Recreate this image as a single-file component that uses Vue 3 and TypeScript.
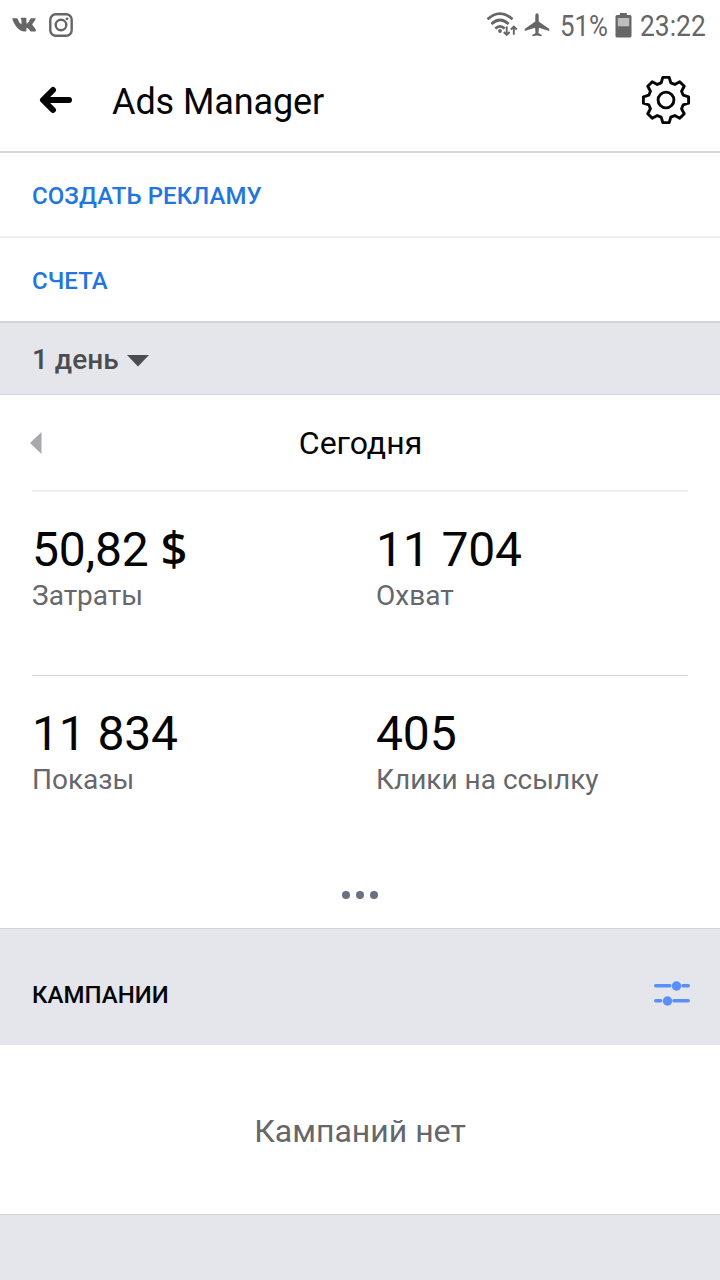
<script setup lang="ts">
interface Metric {
  value: string
  unit?: string
  label: string
}

const metricRows: Metric[][] = [
  [
    { value: '50,82', unit: '$', label: 'Затраты' },
    { value: '11 704', label: 'Охват' },
  ],
  [
    { value: '11 834', label: 'Показы' },
    { value: '405', label: 'Клики на ссылку' },
  ],
]

// Gear outline: one tooth profile repeated every 45 degrees.
const tooth: [number, number][] = [
  [-4.8, -17.2],
  [-3.2, -22.6],
  [3.2, -22.6],
  [4.8, -17.2],
]
const gearPoints = Array.from({ length: 8 }, (_, i) => {
  const a = (i * Math.PI) / 4
  return tooth
    .map(([x, y]) => {
      const px = x * Math.cos(a) - y * Math.sin(a)
      const py = x * Math.sin(a) + y * Math.cos(a)
      return `${px.toFixed(2)},${py.toFixed(2)}`
    })
    .join(' ')
}).join(' ')
</script>

<template>
  <div class="screen">
    <div class="status">
      <svg class="vk" width="25" height="16" viewBox="0 0 25 16">
        <path d="M1 1.2h3.8c.6 0 .8.3 1 .8 1 2.700 2.300 5 3.200 5 .4 0 .5-.3.5-1V3.500c0-1.200-.9-1.400-.9-1.900C8.600 1 9 .7 9.600.7h4c.6 0 .8.3.8 1v4c0 .6.200.8.500.8 1 0 2.500-2.400 3.300-4.500.2-.6.500-.8 1.100-.8h3.500c.8 0 1 .4.700 1-.5 1.500-3.300 4.800-3.300 5.400 0 .7 3 3.200 3.700 5.500.2.900-.2 1.500-1 1.500h-3.600c-1.200 0-2-2.700-3.900-3.600-.7-.3-1 0-1 .8v1.700c0 .8-.4 1.100-1.500 1.100C6.500 14.600 3 8.800.4 2.300.2 1.600.4 1.200 1 1.200z" />
      </svg>
      <svg class="insta" width="24" height="24" viewBox="0 0 24 24">
        <rect x="1.300" y="1.300" width="21.400" height="21.400" rx="5.500" />
        <circle cx="12" cy="12" r="5.300" />
        <circle class="solid" cx="18" cy="5.800" r="1.400" />
      </svg>
      <span class="grow" />
      <svg class="wifi" width="32" height="26" viewBox="0 0 32 26">
        <path class="arc" d="M1.500 7.200Q14-4 26.500 7.200M5.400 12Q14 4 22.600 12M9.300 16.500Q14 12.200 18.700 16.500" />
        <circle cx="14" cy="19" r="1.900" />
        <path class="traffic" d="M20.700 14.500v8M17.800 20l2.900 3 2.900-3M27.800 22.700v-7.500M24.900 17.500l2.900-3 2.900 3" />
      </svg>
      <svg class="plane" width="26" height="24" viewBox="0 0 26 24">
        <path d="M13 .3c1.100 0 1.700 1 1.700 2.500v5.600l10 7c.5.400.6.800.6 1.700v.9l-10.400-3.200-.4 5.200 3.200 2v1.300L13 22.600l-4.700.7V22l3.200-2-.4-5.200L.7 18v-.9c0-.9.1-1.300.6-1.700l10-7V2.800C11.300 1.300 11.900.3 13 .3z" />
      </svg>
      <span class="percent"><span>51%</span></span>
      <svg class="battery" width="17" height="25" viewBox="0 0 17 25">
        <path d="M4.800 0h7v2H15a1.500 1.500 0 0 1 1.500 1.500V23A1.500 1.500 0 0 1 15 24.500H2A1.500 1.500 0 0 1 .5 23V3.500A1.500 1.500 0 0 1 2 2h2.800z" />
        <rect x="2.800" y="5" width="11.400" height="8.300" fill="#bdbdbd" />
      </svg>
      <span class="clock"><span>23:22</span></span>
    </div>

    <header class="header">
      <svg class="back" width="34" height="28" viewBox="0 0 34 28">
        <path d="M15 4L5 14 15 24M6 14h25" />
      </svg>
      <h1>Ads Manager</h1>
      <svg class="gear" width="50" height="50" viewBox="-25 -25 50 50">
        <polygon :points="gearPoints" />
        <circle r="7.900" />
      </svg>
    </header>

    <button class="action first">СОЗДАТЬ РЕКЛАМУ</button>
    <button class="action">СЧЕТА</button>

    <div class="period">
      <span>1 день</span>
      <svg width="22" height="12" viewBox="0 0 22 12"><path d="M0 0h22L11 11.500z" /></svg>
    </div>

    <section class="stats">
      <div class="day">
        <svg width="12" height="22" viewBox="0 0 12 22"><path d="M11.500 0v22L0 11z" /></svg>
        <span class="day-name">Сегодня</span>
      </div>
      <div v-for="(row, i) in metricRows" :key="i" class="row">
        <div v-for="m in row" :key="m.label" class="metric">
          <div class="value">{{ m.value }}<template v-if="m.unit">&nbsp;<span class="unit">{{ m.unit }}</span></template></div>
          <div class="label">{{ m.label }}</div>
        </div>
      </div>
      <div class="dots"><i /><i /><i /></div>
    </section>

    <div class="section-head">
      <h2>КАМПАНИИ</h2>
      <svg width="36" height="26" viewBox="0 0 36 26">
        <path d="M1.800 5.800h14M29 5.800h5.200M1.800 20.800h4.700M20 20.800h14.200" />
        <circle cx="22.500" cy="6" r="4.700" />
        <circle cx="13.500" cy="21" r="4.700" />
      </svg>
    </div>
    <div class="empty">Кампаний нет</div>
    <div class="footer" />
  </div>
</template>

<style>
body {
  background: #fff;
}
</style>

<style scoped>
.screen {
  width: 720px;
  height: 1280px;
  display: flex;
  flex-direction: column;
  overflow: hidden;
  background: #fff;
  color: #050505;
  font-family: Roboto, sans-serif;
}
.screen * {
  box-sizing: border-box;
}
.screen > * {
  flex-shrink: 0;
}
svg {
  display: block;
  flex: none;
}
.status {
  height: 50px;
  display: flex;
  align-items: center;
  padding: 0 13px 0 12px;
  color: #666;
  fill: #666;
  font-size: 30px;
}
.insta {
  margin-left: 12px;
  fill: none;
  stroke: #666;
  stroke-width: 2.400;
}
.insta .solid {
  fill: #666;
  stroke: none;
}
.grow {
  flex: 1;
}
.wifi .arc,
.wifi .traffic {
  fill: none;
  stroke: #666;
  stroke-width: 2.700;
}
.wifi .traffic {
  stroke-width: 1.900;
}
.plane {
  margin-left: 6px;
}
.percent,
.clock {
  display: block;
  white-space: nowrap;
}
.percent {
  width: 49px;
  margin-left: 10px;
}
.clock {
  width: 67px;
  margin-left: 8px;
}
.percent span,
.clock span {
  display: inline-block;
  transform: scaleX(0.860);
  transform-origin: left;
}
.clock span {
  transform: scaleX(0.880);
}
.battery {
  margin-left: 6px;
}
.header {
  height: 103px;
  display: flex;
  align-items: center;
  padding: 0 29px 2px 38px;
  border-bottom: 2px solid #d8d8d8;
}
.back {
  fill: none;
  stroke: #050505;
  stroke-width: 6;
  stroke-linecap: round;
  stroke-linejoin: round;
}
h1 {
  flex: 1;
  margin: 4px 0 0 40px;
  font-size: 36px;
  font-weight: 400;
  letter-spacing: -0.100px;
}
.gear {
  fill: none;
  stroke: #050505;
  stroke-width: 2.900;
  stroke-linejoin: round;
}
.action {
  height: 83px;
  padding: 3px 32px 0;
  border: 0;
  background: #fff;
  color: #2276dc;
  text-align: left;
  font: 500 24px Roboto, sans-serif;
  letter-spacing: 0.070px;
}
.action.first {
  height: 85px;
  border-bottom: 2px solid #efefef;
}
.period {
  height: 74px;
  display: flex;
  align-items: center;
  gap: 9px;
  padding: 2px 32px 0;
  background: #e4e6eb;
  border-top: 2px solid #d2d4d8;
  border-bottom: 1px solid #d2d4d8;
  color: #4b4c4f;
  fill: #4b4c4f;
  font-size: 28px;
  font-weight: 500;
}
.period svg {
  margin: 3px 0 0 -1px;
}
.stats {
  height: 533px;
  padding: 0 32px;
}
.day {
  height: 97px;
  display: flex;
  align-items: center;
  border-bottom: 2px solid #eee;
  fill: #a7a9ad;
}
.day svg {
  margin-left: -2px;
}
.day-name {
  flex: 1;
  margin-right: 9px;
  text-align: center;
  font-size: 32px;
}
.row {
  height: 183px;
  display: grid;
  grid-template-columns: 344px 1fr;
  padding-top: 30px;
}
.row + .row {
  border-top: 1px solid #d4d4d4;
  height: 186px;
}
.value {
  font-size: 48px;
  line-height: 56px;
  letter-spacing: -0.150px;
}
.unit {
  font-family: "Noto Sans", sans-serif;
  font-size: 47px;
  font-weight: 500;
  line-height: 0;
}
.label {
  margin-top: 2px;
  color: #65676b;
  font-size: 28px;
  line-height: 32px;
}
.dots {
  display: flex;
  justify-content: center;
  gap: 6px;
  padding-top: 30px;
}
.dots i {
  width: 8px;
  height: 8px;
  border-radius: 50%;
  background: #6b7083;
}
.section-head {
  height: 117px;
  display: flex;
  align-items: center;
  justify-content: space-between;
  padding: 12px 30px 0 32px;
  border-top: 1px solid #d2d4d8;
  background: #e4e6eb;
}
h2 {
  margin: 3px 0 0;
  font-size: 24px;
  font-weight: 500;
  letter-spacing: 0.070px;
}
.section-head svg {
  fill: #5890f8;
  stroke: none;
}
.section-head path {
  stroke: #5890f8;
  stroke-width: 3.600;
  stroke-linecap: round;
}
.empty {
  height: 169px;
  display: flex;
  align-items: center;
  justify-content: center;
  padding-top: 3px;
  color: #65676b;
  font-size: 32px;
}
.footer {
  flex: 1;
  border-top: 1px solid #d2d4d8;
  background: #e4e6eb;
}
</style>
